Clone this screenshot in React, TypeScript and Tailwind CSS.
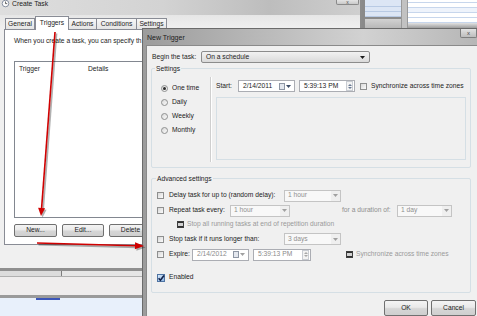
import React from "react";

function Tri({ c = "#1a1a1a" }: { c?: string }) {
  return (
    <svg width="5" height="3" viewBox="0 0 5 3" className="shrink-0">
      <path d="M0 0H5L2.5 3Z" fill={c} />
    </svg>
  );
}

function Check({ state = "off" }: { state?: "off" | "on" | "dis" }) {
  if (state === "on")
    return (
      <span className="block relative w-[8px] h-[8px] shrink-0 border border-[#4f74a3] bg-[linear-gradient(135deg,#d6e8fa,#8fb8e6)]">
        <svg viewBox="0 0 8 8" className="absolute left-[-1px] top-[-1px] w-[8px] h-[8px]">
          <path d="M1.6 4.2 L3.4 6.2 L7 1.4" stroke="#13224a" strokeWidth="1.6" fill="none" />
        </svg>
      </span>
    );
  if (state === "dis")
    return (
      <span className="block w-[7px] h-[7px] shrink-0 border border-[#3e3e3e] bg-[linear-gradient(#2f2f2f,#2f2f2f_22%,#d2d2d2_22%,#d2d2d2_78%,#2f2f2f_78%)]" />
    );
  return <span className="block w-[7px] h-[7px] shrink-0 border border-[#8e8f8f] bg-[linear-gradient(135deg,#d8d8d8,#fbfbfb)]" />;
}

function Radio({ on = false, label }: { on?: boolean; label: string }) {
  return (
    <div className="h-[14px] flex items-center gap-[4px]">
      <span className="w-[7px] h-[7px] rounded-full border border-[#8e8f8f] bg-[linear-gradient(135deg,#d9d9d9,#fafafa)] flex items-center justify-center shrink-0">
        {on && <span className="w-[3px] h-[3px] rounded-full bg-[#2b2b2b]" />}
      </span>
      <span>{label}</span>
    </div>
  );
}

function Combo({ cls, text }: { cls: string; text: string }) {
  return (
    <div className={`flex h-[12px] items-stretch border border-[#c4c4c4] bg-[#efefef] ${cls}`}>
      <span className="flex-1 flex items-center pl-[3px] text-[#8f8f8f] bg-[#f8f8f8]">{text}</span>
      <span className="w-[9px] flex items-center justify-center">
        <Tri c="#a0a0a0" />
      </span>
    </div>
  );
}

function DateBox({ cls, text, dim = false }: { cls: string; text: string; dim?: boolean }) {
  return (
    <div className={`flex h-[12px] items-center border border-[#abadb3] bg-white pr-[3px] ${cls}`}>
      <span className={`flex-1 pl-[4px] ${dim ? "text-[#8a8a8a]" : ""}`}>{text}</span>
      <span className="w-[6px] h-[7px] border border-[#8d96a4] bg-[#e3e7ee] mr-[1px]" />
      <Tri c={dim ? "#a0a0a0" : "#3b4b66"} />
    </div>
  );
}

function TimeBox({ cls, text, dim = false }: { cls: string; text: string; dim?: boolean }) {
  return (
    <div className={`flex h-[12px] items-center border border-[#abadb3] bg-white pr-[1px] ${cls}`}>
      <span className={`flex-1 pl-[4px] ${dim ? "text-[#8a8a8a]" : ""}`}>{text}</span>
      <span className="w-[7px] h-[10px] flex flex-col items-center justify-center gap-[1px] border border-[#c8ccd2] bg-[#f3f3f3]">
        <svg width="4" height="2" viewBox="0 0 4 2"><path d="M0 2H4L2 0Z" fill={dim ? "#a8a8a8" : "#6a7a94"} /></svg>
        <svg width="4" height="2" viewBox="0 0 4 2"><path d="M0 0H4L2 2Z" fill={dim ? "#a8a8a8" : "#6a7a94"} /></svg>
      </span>
    </div>
  );
}

function Btn({ cls, text }: { cls: string; text: string }) {
  return (
    <div
      className={`flex items-center justify-center rounded-[2px] border border-[#707070] bg-[linear-gradient(#f4f4f4,#e9e9e9_45%,#d6d6d6_55%,#cfcfcf)] ${cls}`}
    >
      {text}
    </div>
  );
}

export default function App() {
  return (
    <div className="relative w-[477px] h-[316px] overflow-hidden bg-[#dfe6ef] text-[6.7px] leading-none text-[#1c1c1c] font-['Liberation_Sans',Arial,sans-serif]">
      {/* background window, top right */}
      <div className="absolute left-[362px] top-0 w-[115px] h-[28px] flex bg-[#c9c9c9]">
        <div className="w-[3px] bg-[#8a8a8a]" />
        <div className="w-[36px] flex flex-col bg-[#dce6f5]">
          <div className="h-[7px] border-b border-[#b8cae4]" />
          <div className="h-[5px] border-b border-[#b8cae4]" />
          <div className="h-[5px] border-b border-[#b8cae4]" />
          <div className="h-[2px] bg-[#8c8c8c]" />
          <div className="flex-1 bg-[linear-gradient(#d2d2d2,#b8b8b8)]" />
        </div>
        <div className="w-[7px] bg-[#c2c2c2] border-x border-[#9a9a9a]" />
        <div className="flex-1 flex flex-col bg-white">
          <div className="h-[3px] border-b border-[#c7d6ec]" />
          <div className="h-[5px] border-b border-[#c7d6ec]" />
          <div className="h-[5px] border-b border-[#c7d6ec] bg-[#eef3fb]" />
          <div className="h-[5px] border-b border-[#c7d6ec]" />
          <div className="h-[5px] border-b border-[#c7d6ec]" />
          <div className="flex-1 bg-[linear-gradient(#e2e2e2,#9d9d9d)]" />
        </div>
      </div>

      {/* background window, bottom left */}
      <div className="absolute left-0 top-[268px] w-[142px] h-[48px] flex flex-col bg-[#efeded]">
        <div className="h-[3px] bg-[#8f8f8f]" />
        <div className="h-[6px] flex border-b border-[#b0b0b0] bg-[#e6e6e6]">
          <div className="w-[62px] border-r border-[#7d7d7d] bg-[#dcdcdc]" />
        </div>
        <div className="flex-1" />
        <div className="h-[3px] bg-[#9a9a9a]" />
        <div className="h-[18px] bg-[#e8f0fb] flex">
          <div className="ml-[36px] w-[24px] h-[2px] bg-[#3b55b8]" />
        </div>
      </div>

      {/* Create Task window */}
      <div className="absolute left-0 top-0 w-[362px] h-[268px] flex flex-col bg-[#f0f0f0] border-r-[2px] border-[#8c8c8c]">
        <div className="h-[15px] flex items-start bg-[linear-gradient(90deg,#dedede,#d3d3d3_45%,#bdbdbd_75%,#cfcfcf)]">
          <svg width="9" height="8" viewBox="0 0 9 8" className="ml-[1px]">
            <circle cx="4.5" cy="3.5" r="3.3" fill="#fbfbfb" stroke="#7c8699" strokeWidth="0.9" />
            <path d="M4.5 1.5V3.6H6.2" stroke="#2b2b2b" strokeWidth="0.7" fill="none" />
          </svg>
          <span className="ml-[2px] text-[6.8px] leading-[7px]">Create Task</span>
          <div className="ml-auto mr-[1px] w-[23px] h-[5px] rounded-b-[2px] border border-t-0 border-[#8a8a8a] bg-[linear-gradient(#e4e4e4,#c9c9c9)] flex items-end justify-center">
            <span className="text-[5px] leading-[4px] text-[#555]">x</span>
          </div>
        </div>
        <div className="h-[14px] flex items-end pl-[5px] bg-[linear-gradient(#e6e6e6,#f0f0f0)]">
          <div className="h-[11px] w-[30px] flex items-center justify-center border border-b-0 border-[#898c95] bg-[linear-gradient(#f7f7f7,#e4e4e4)]">General</div>
          <div className="relative z-10 h-[14px] w-[34px] -mb-[1px] flex items-center justify-center border border-b-0 border-[#898c95] bg-white">Triggers</div>
          <div className="h-[11px] w-[28px] flex items-center justify-center border border-b-0 border-l-0 border-[#898c95] bg-[linear-gradient(#f7f7f7,#e4e4e4)]">Actions</div>
          <div className="h-[11px] w-[40px] flex items-center justify-center border border-b-0 border-l-0 border-[#898c95] bg-[linear-gradient(#f7f7f7,#e4e4e4)]">Conditions</div>
          <div className="h-[11px] w-[30px] flex items-center justify-center border border-b-0 border-l-0 border-[#898c95] bg-[linear-gradient(#f7f7f7,#e4e4e4)]">Settings</div>
        </div>
        <div className="ml-[4px] w-[356px] h-[216px] border border-[#898c95] bg-white flex flex-col pl-[9px] pt-[7px] overflow-hidden">
          <div className="h-[8px] flex items-center whitespace-nowrap">
            When you create a task, you can specify th
          </div>
          <div className="mt-[16px] w-[330px] h-[157px] border border-[#828790] flex pt-[3px] pl-[4px]">
            <div className="w-[69px] h-[8px] flex items-center">Trigger</div>
            <div className="h-[8px] flex items-center">Details</div>
          </div>
          <div className="mt-[6px] flex gap-[5px]">
            <Btn cls="w-[43px] h-[13px]" text="New..." />
            <Btn cls="w-[42px] h-[13px]" text="Edit..." />
            <Btn cls="w-[43px] h-[13px]" text="Delete" />
          </div>
        </div>
      </div>

      {/* New Trigger window */}
      <div className="absolute left-[142px] top-[28px] w-[340px] h-[292px] flex flex-col border-l border-t border-[#6b6b6b] bg-[linear-gradient(90deg,#9c9c9c,#b5b5b5_30%,#d2d2d2_65%,#b5b5b5)]">
        <div className="h-[16px] flex items-start">
          <span className="ml-[4px] mt-[5px] text-[7px] leading-[7px]">New Trigger</span>
          <div className="ml-auto mr-[5px] w-[17px] h-[9px] rounded-b-[2px] border border-t-0 border-[#7e7e7e] bg-[linear-gradient(#e2e2e2,#bdbdbd)] flex items-center justify-center">
            <span className="text-[6px] text-[#4a4a4a]">x</span>
          </div>
        </div>
        <div className="flex-1 ml-[3px] border-l border-t border-[#8a8a8a] bg-[#f0f0f0] flex flex-col">
          {/* Begin the task */}
          <div className="mt-[5px] h-[12px] flex items-center pl-[5px]">
            <span className="w-[49px]">Begin the task:</span>
            <div className="w-[169px] h-[12px] flex items-center rounded-[2px] border border-[#8c8c8c] bg-[linear-gradient(#f2f2f2,#e6e6e6_50%,#dadada)] pl-[4px] pr-[4px]">
              <span className="flex-1">On a schedule</span>
              <Tri />
            </div>
          </div>

          {/* Settings group */}
          <div className="relative mt-[5px] ml-[4px] w-[320px] h-[100px] border border-[#d5dfe5] rounded-[2px] flex pt-[8px] pb-[5px]">
            <span className="absolute -top-[4px] left-[3px] px-[1px] bg-[#f0f0f0] leading-[7px]">Settings</span>
            <div className="w-[58px] flex flex-col pl-[9px] pt-[4px]">
              <Radio on label="One time" />
              <Radio label="Daily" />
              <Radio label="Weekly" />
              <Radio label="Monthly" />
            </div>
            <div className="w-[2px] border-l border-[#cfcfcf] border-r border-r-white" />
            <div className="flex-1 flex flex-col pl-[4px]">
              <div className="mt-[3px] h-[12px] flex items-center">
                <span className="w-[22px]">Start:</span>
                <DateBox cls="w-[57px]" text="2/14/2011" />
                <TimeBox cls="ml-[4px] w-[56px]" text="5:39:13 PM" />
                <span className="ml-[5px] flex"><Check /></span>
                <span className="ml-[4px]">Synchronize across time zones</span>
              </div>
              <div className="mt-[5px] w-[250px] h-[63px] border border-[#d5dfe5]" />
            </div>
          </div>

          {/* Advanced settings */}
          <div className="relative mt-[10px] ml-[4px] w-[320px] h-[115px] border border-[#d5dfe5] rounded-[2px] flex flex-col pt-[9px] pl-[5px]">
            <span className="absolute -top-[4px] left-[4px] px-[1px] bg-[#f0f0f0] leading-[7px]">Advanced settings</span>
            <div className="h-[15px] flex items-center">
              <Check />
              <span className="ml-[5px] w-[115px]">Delay task for up to (random delay):</span>
              <Combo cls="w-[57px]" text="1 hour" />
            </div>
            <div className="h-[15px] flex items-center">
              <Check />
              <span className="ml-[5px] w-[61px]">Repeat task every:</span>
              <Combo cls="w-[60px]" text="1 hour" />
              <span className="ml-[52px] w-[55px] text-[#8f8f8f]">for a duration of:</span>
              <Combo cls="w-[55px]" text="1 day" />
            </div>
            <div className="h-[13px] flex items-center pl-[20px]">
              <Check state="dis" />
              <span className="ml-[3px] text-[#9a9a9a]">Stop all running tasks at end of repetition duration</span>
            </div>
            <div className="h-[16px] flex items-center">
              <Check />
              <span className="ml-[5px] w-[115px]">Stop task if it runs longer than:</span>
              <Combo cls="w-[57px]" text="3 days" />
            </div>
            <div className="h-[15px] flex items-center">
              <Check />
              <span className="ml-[5px] w-[23px]">Expire:</span>
              <DateBox cls="w-[57px]" text="2/14/2012" dim />
              <TimeBox cls="ml-[4px] w-[58px]" text="5:39:13 PM" dim />
              <span className="ml-[35px] flex"><Check state="dis" /></span>
              <span className="ml-[3px] text-[#9a9a9a]">Synchronize across time zones</span>
            </div>
            <div className="mt-[8px] h-[15px] flex items-center">
              <Check state="on" />
              <span className="ml-[4px]">Enabled</span>
            </div>
          </div>

          {/* OK / Cancel */}
          <div className="mt-[7px] ml-[237px] flex gap-[3px]">
            <Btn cls="w-[44px] h-[16px]" text="OK" />
            <Btn cls="w-[45px] h-[16px]" text="Cancel" />
          </div>
        </div>
      </div>

      {/* red arrows drawn over the screenshot */}
      <svg className="absolute left-0 top-0 pointer-events-none" width="477" height="316" viewBox="0 0 477 316">
        <g opacity="0.3" transform="translate(1.5 1.5)">
          <line x1="55" y1="32" x2="41.6" y2="208" stroke="#000" strokeWidth="1.8" />
          <polygon points="41,216 45.1,208.3 38.1,207.7" fill="#000" />
          <line x1="37" y1="243" x2="135" y2="245.8" stroke="#000" strokeWidth="1.8" />
          <polygon points="144,246 135.1,242.3 134.9,249.3" fill="#000" />
        </g>
        <line x1="55" y1="32" x2="41.6" y2="208" stroke="#d00000" strokeWidth="1.6" />
        <polygon points="41,216 45.1,208.3 38.1,207.7" fill="#d00000" />
        <line x1="37" y1="243" x2="135" y2="245.8" stroke="#d00000" strokeWidth="1.6" />
        <polygon points="144,246 135.1,242.3 134.9,249.3" fill="#d00000" />
      </svg>
    </div>
  );
}
